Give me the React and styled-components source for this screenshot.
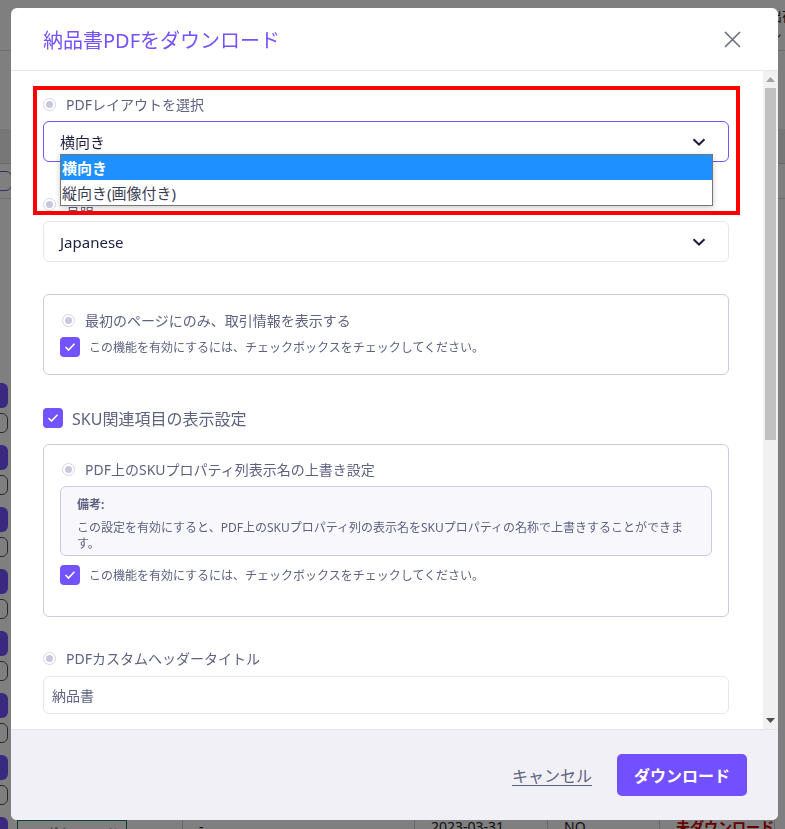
import React from "react";
import styled, { createGlobalStyle } from "styled-components";

/* ============================ Global ============================ */
const GlobalStyle = createGlobalStyle`
  html, body { margin:0; padding:0; }
  body {
    font-family: "Noto Sans", "Noto Sans CJK JP", sans-serif;
    background:#ffffff;
    overflow:hidden;
  }
  * { box-sizing:border-box; }
`;

/* ============================ Back page (behind overlay) ============================ */
const BackPage = styled.div`
  width:785px;
  height:829px;
  overflow:hidden;
  display:flex;
  flex-direction:column;
  background:#ffffff;
  & > * { flex-shrink:0; }
`;

const BackHeader = styled.div`
  height:51px;
  border-bottom:1px solid #d9d9d9;
  display:flex;
  justify-content:flex-end;
  align-items:center;
`;

const BackHeaderText = styled.div`
  margin-right:-10px;
  font-size:13px;
  line-height:18px;
  color:#222;
`;

const BackSpacer = styled.div`
  height:${p => p.h}px;
`;

const BackBand = styled.div`
  height:35px;
  background:#eeeeee;
  border-bottom:1px solid #cccccc;
`;

const BackToolbar = styled.div`
  height:35px;
  display:flex;
  align-items:center;
  justify-content:space-between;
  border-bottom:1px solid #dddddd;
`;

const BackOutlineBtn = styled.div`
  width:52px;
  height:20px;
  margin-left:-40px;
  border:1px solid #6a5ad0;
  border-radius:6px;
`;

const BackLinks = styled.div`
  width:14px;
  margin-right:-4px;
  margin-top:140px;
  display:flex;
  flex-direction:column;
  gap:9px;
`;

const BackLinkLine = styled.div`
  height:1px;
  background:#3b2fd0;
`;

const BackRow = styled.div`
  height:62px;
  display:flex;
`;

const BackBtnCell = styled.div`
  width:8px;
  display:flex;
  flex-direction:column;
  align-items:flex-end;
  gap:5px;
`;

const BackPurpleBtn = styled.div`
  width:40px;
  height:25px;
  border-radius:6px;
  background:#7352ff;
`;

const BackGhostBtn = styled.div`
  width:40px;
  height:20px;
  border-radius:6px;
  border:1px solid #555;
`;

const BackCell = styled.div`
  width:${p => p.w}px;
  border-right:1px solid #cfcfcf;
  padding:0 0 0 ${p => p.pl ?? 16}px;
  font-size:14px;
  line-height:20px;
  color:${p => p.red ? "#cc0000" : "#222"};
  font-weight:${p => p.red ? 700 : 400};
`;

const BackPdfBtn = styled.div`
  width:110px;
  height:24px;
  margin-left:9px;
  margin-top:3px;
  border:1px solid #167a6b;
  font-size:12px;
  color:#167a6b;
  padding:3px 6px;
`;

/* ============================ Overlay / Modal ============================ */
const Overlay = styled.div`
  position:fixed;
  inset:0;
  z-index:10;
  background:rgba(0,0,0,0.5);
  display:flex;
  padding:8px 7px 9px 11px;
`;

const Modal = styled.div`
  flex:1;
  background:#ffffff;
  border-radius:6px;
  display:flex;
  flex-direction:column;
  overflow:hidden;
`;

const ModalHeader = styled.div`
  height:63px;
  flex-shrink:0;
  border-bottom:1px solid #e6e4f5;
  display:flex;
  align-items:center;
  justify-content:space-between;
  padding:0 37px 0 32px;
`;

const ModalTitle = styled.div`
  font-size:20px;
  color:#7352ff;
  font-weight:400;
`;

const ModalBody = styled.div`
  flex:1;
  display:flex;
  position:relative;
  min-height:0;
`;

const BodyContent = styled.div`
  flex:1;
  overflow:hidden;
  padding:23px 34px 0 32px;
`;

const Section = styled.div`
  margin-top:${p => p.mt || 0}px;
`;

const FieldLabel = styled.div`
  height:20px;
  display:flex;
  align-items:center;
  gap:10px;
  margin-left:${p => p.ml || 0}px;
  font-size:14px;
  color:#5d6281;
`;

const RadioDot = styled.span`
  width:13px;
  height:13px;
  border-radius:50%;
  border:1px solid #d3d4e6;
  display:flex;
  align-items:center;
  justify-content:center;
  flex-shrink:0;
  &::after{
    content:"";
    width:7px;
    height:7px;
    border-radius:50%;
    background:#c7c8df;
  }
`;

const SelectBox = styled.div`
  margin-top:7px;
  height:41px;
  border:1px solid ${p => p.active ? "#7352ff" : "#e6e4f5"};
  border-radius:6px;
  display:flex;
  align-items:center;
  justify-content:space-between;
  padding:0 22px 0 16px;
  font-size:15px;
  color:#1f2040;
`;

const OptionBox = styled.div`
  margin-top:${p => p.mt}px;
  border:1px solid #c9cbe3;
  border-radius:6px;
  padding:${p => p.pt}px 16px ${p => p.pb}px 16px;
`;

const CheckRow = styled.div`
  margin-top:${p => p.mt || 0}px;
  height:20px;
  display:flex;
  align-items:center;
  gap:9px;
  font-size:${p => p.big ? 16 : 12}px;
  color:#5d6281;
`;

const CheckSquare = styled.span`
  width:20px;
  height:20px;
  border-radius:4px;
  background:#7352ff;
  display:flex;
  align-items:center;
  justify-content:center;
  flex-shrink:0;
`;

const NoteBox = styled.div`
  margin-top:7px;
  height:70px;
  background:#f7f7fc;
  border:1px solid #c9cbe3;
  border-radius:6px;
  padding:9px 16px 0 16px;
  font-size:12px;
  line-height:16px;
  color:#5d6281;
`;

const NoteTitle = styled.div`
  font-weight:700;
  line-height:18px;
  margin-bottom:6px;
`;

const TextInput = styled.div`
  margin-top:8px;
  height:38px;
  border:1px solid #e6e4f5;
  border-radius:6px;
  display:flex;
  align-items:center;
  padding-left:8px;
  font-size:14px;
  color:#5d6281;
`;

/* ============================ Overlays inside body ============================ */
const RedFrame = styled.div`
  position:absolute;
  left:22px;
  top:15px;
  width:707px;
  height:129px;
  border:4px solid #ff0000;
  pointer-events:none;
`;

const DropList = styled.div`
  position:absolute;
  left:49px;
  top:83px;
  width:653px;
  border:1px solid #767676;
  background:#ffffff;
  box-shadow:0 2px 6px rgba(0,0,0,0.2);
`;

const DropOption = styled.div`
  height:25px;
  display:flex;
  align-items:center;
  padding-left:1px;
  font-size:15px;
  background:${p => p.selected ? "#1e90ff" : "#ffffff"};
  color:${p => p.selected ? "#ffffff" : "#3a3c52"};
  font-weight:${p => p.selected ? 700 : 400};
`;

/* ============================ Scrollbar ============================ */
const ScrollTrack = styled.div`
  width:15px;
  background:#f1f1f1;
  display:flex;
  flex-direction:column;
`;

const ScrollArrow = styled.div`
  height:17px;
  display:flex;
  align-items:center;
  justify-content:center;
`;

const ScrollThumb = styled.div`
  height:352px;
  margin:0 2px;
  background:#c1c1c1;
`;

const ScrollRest = styled.div`
  flex:1;
`;

/* ============================ Footer ============================ */
const ModalFooter = styled.div`
  height:91px;
  flex-shrink:0;
  background:#f1f0f7;
  border-top:1px solid #e6e4f5;
  display:flex;
  align-items:center;
  justify-content:flex-end;
  gap:25px;
  padding-right:31px;
`;

const CancelLink = styled.span`
  font-size:16px;
  color:#5d6281;
  text-decoration:underline;
  text-underline-offset:3px;
`;

const PrimaryButton = styled.div`
  height:42px;
  padding:0 17px;
  border-radius:5px;
  background:#7350ff;
  color:#ffffff;
  font-size:16px;
  font-weight:700;
  display:flex;
  align-items:center;
`;

/* ============================ Icons ============================ */
const CloseIcon = () => (
  <svg width="17" height="17" viewBox="0 0 17 17">
    <path d="M1 1 L16 16 M16 1 L1 16" stroke="#6b6f80" strokeWidth="1.6" fill="none" />
  </svg>
);

const Chevron = () => (
  <svg width="14" height="8" viewBox="0 0 14 8">
    <path d="M1.5 1.2 L7 6.5 L12.5 1.2" stroke="#1f2040" strokeWidth="2" fill="none" />
  </svg>
);

const Check = () => (
  <svg width="12" height="10" viewBox="0 0 12 10">
    <path d="M1.5 5 L4.5 8 L10.5 1.8" stroke="#ffffff" strokeWidth="1.6" fill="none" />
  </svg>
);

const Triangle = ({ down }) => (
  <svg width="9" height="5" viewBox="0 0 9 5">
    <path d={down ? "M0 0 L9 0 L4.5 5 Z" : "M0 5 L9 5 L4.5 0 Z"} fill={down ? "#505050" : "#a3a3a3"} />
  </svg>
);

/* ============================ Data ============================ */
const backRows = [0, 1, 2, 3, 4, 5, 6];

const CHECK_TEXT = "この機能を有効にするには、チェックボックスをチェックしてください。";

/* ============================ Components ============================ */
const BackgroundPage = () => (
  <BackPage>
    <BackHeader>
      <BackHeaderText>出荷<br />レ</BackHeaderText>
    </BackHeader>
    <BackSpacer h={78} />
    <BackBand />
    <BackToolbar>
      <BackOutlineBtn />
    </BackToolbar>
    <BackSpacer h={184} />
    {backRows.map(i => (
      <BackRow key={i}>
        <BackBtnCell>
          <BackPurpleBtn />
          <BackGhostBtn />
        </BackBtnCell>
      </BackRow>
    ))}
    <BackRow>
      <BackBtnCell>
        <BackPurpleBtn />
      </BackBtnCell>
      <BackCell w={175} pl={0}><BackPdfBtn>PDFダウンロード</BackPdfBtn></BackCell>
      <BackCell w={232}>-</BackCell>
      <BackCell w={133}>2023-03-31</BackCell>
      <BackCell w={112}>NO</BackCell>
      <BackCell w={115} red>未ダウンロード</BackCell>
    </BackRow>
  </BackPage>
);

const PdfDialog = () => (
  <Overlay>
    <Modal>
      <ModalHeader>
        <ModalTitle>納品書PDFをダウンロード</ModalTitle>
        <CloseIcon />
      </ModalHeader>

      <ModalBody>
        <BodyContent>
          <Section>
            <FieldLabel><RadioDot />PDFレイアウトを選択</FieldLabel>
            <SelectBox active>横向き<Chevron /></SelectBox>
          </Section>

          <Section mt={32}>
            <FieldLabel><RadioDot />言語</FieldLabel>
            <SelectBox>Japanese<Chevron /></SelectBox>
          </Section>

          <OptionBox mt={32} pt={15} pb={17}>
            <FieldLabel ml={2}><RadioDot />最初のページにのみ、取引情報を表示する</FieldLabel>
            <CheckRow mt={7}><CheckSquare><Check /></CheckSquare>{CHECK_TEXT}</CheckRow>
          </OptionBox>

          <CheckRow mt={33} big><CheckSquare><Check /></CheckSquare>SKU関連項目の表示設定</CheckRow>

          <OptionBox mt={16} pt={14} pb={31}>
            <FieldLabel ml={2}><RadioDot />PDF上のSKUプロパティ列表示名の上書き設定</FieldLabel>
            <NoteBox>
              <NoteTitle>備考:</NoteTitle>
              この設定を有効にすると、PDF上のSKUプロパティ列の表示名をSKUプロパティの名称で上書きすることができま<br />す。
            </NoteBox>
            <CheckRow mt={9}><CheckSquare><Check /></CheckSquare>{CHECK_TEXT}</CheckRow>
          </OptionBox>

          <Section mt={31}>
            <FieldLabel><RadioDot />PDFカスタムヘッダータイトル</FieldLabel>
            <TextInput>納品書</TextInput>
          </Section>
        </BodyContent>

        <ScrollTrack>
          <ScrollArrow><Triangle /></ScrollArrow>
          <ScrollThumb />
          <ScrollRest />
          <ScrollArrow><Triangle down /></ScrollArrow>
        </ScrollTrack>

        <DropList>
          <DropOption selected>横向き</DropOption>
          <DropOption>縦向き(画像付き)</DropOption>
        </DropList>
        <RedFrame />
      </ModalBody>

      <ModalFooter>
        <CancelLink>キャンセル</CancelLink>
        <PrimaryButton>ダウンロード</PrimaryButton>
      </ModalFooter>
    </Modal>
  </Overlay>
);

export default function App() {
  return (
    <>
      <GlobalStyle />
      <BackgroundPage />
      <PdfDialog />
    </>
  );
}
